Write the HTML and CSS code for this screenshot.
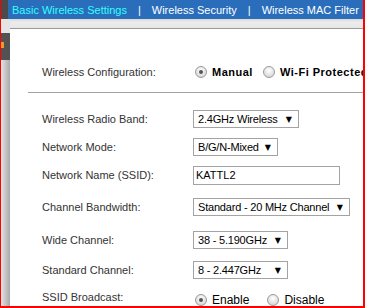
FILE: index.html
```html
<!DOCTYPE html>
<html lang="en">
<head>
    <meta charset="UTF-8">
    <title>Basic Wireless Settings</title>
    <link rel="stylesheet" href="styles.css">
</head>
<body>
    <div class="frame">
        <!-- Tabs -->
        <nav class="tabs">
            <a class="tab active">Basic Wireless Settings</a>
            <span class="sep">|</span>
            <a class="tab">Wireless Security</a>
            <span class="sep">|</span>
            <a class="tab">Wireless MAC Filter</a>
        </nav>

        <div class="body">
            <aside class="side">
                <div class="side-top"></div>
                <div class="side-block"><span class="side-mark"></span></div>
            </aside>

            <div class="content">
                <div class="strip"></div>

                <section class="panel">
                    <div class="row row-config">
                        <span class="label">Wireless Configuration:</span>
                        <div class="choices">
                            <span class="radio checked"></span>
                            <span class="choice bold">Manual</span>
                            <span class="radio"></span>
                            <span class="choice bold">Wi-Fi Protected Setup</span>
                        </div>
                    </div>

                    <hr class="divider">

                    <div class="row row-band">
                        <span class="label">Wireless Radio Band:</span>
                        <div class="select w-band"><span>2.4GHz Wireless</span><span class="arrow">&#9660;</span></div>
                    </div>

                    <div class="row">
                        <span class="label">Network Mode:</span>
                        <div class="select w-mode"><span>B/G/N-Mixed</span><span class="arrow">&#9660;</span></div>
                    </div>

                    <div class="row">
                        <span class="label">Network Name (SSID):</span>
                        <div class="textbox">KATTL2</div>
                    </div>

                    <div class="row row-bw">
                        <span class="label">Channel Bandwidth:</span>
                        <div class="select w-bw"><span>Standard - 20 MHz Channel</span><span class="arrow">&#9660;</span></div>
                    </div>

                    <div class="row row-wide">
                        <span class="label">Wide Channel:</span>
                        <div class="select w-chan"><span>38 - 5.190GHz</span><span class="arrow">&#9660;</span></div>
                    </div>

                    <div class="row row-std">
                        <span class="label">Standard Channel:</span>
                        <div class="select w-chan"><span>8 - 2.447GHz</span><span class="arrow">&#9660;</span></div>
                    </div>

                    <div class="row row-bcast">
                        <span class="label">SSID Broadcast:</span>
                        <div class="choices low">
                            <span class="radio checked"></span>
                            <span class="choice">Enable</span>
                            <span class="radio gap"></span>
                            <span class="choice">Disable</span>
                        </div>
                    </div>
                </section>
            </div>
        </div>
    </div>
</body>
</html>
```

FILE: styles.css
```css
body {
    margin: 0;
    font-family: "Liberation Sans", Arial, sans-serif;
    font-size: 11px;
    background-color: #fff;
}

.frame {
    width: 362px;
    height: 306px;
    border: 2px solid #ff0000;
    border-top: none;
    border-left-width: 1px;
    overflow: hidden;
    display: flex;
    flex-direction: column;
}

/* Tabs */
.tabs {
    display: flex;
    align-items: center;
    height: 19px;
    flex-shrink: 0;
    background-color: #2a6ebb;
    border-left: 7px solid #4b4b4b;
    padding-left: 4px;
    white-space: nowrap;
    color: #ffffff;
}

.tab {
    color: #ffffff;
}

.tab.active {
    color: #33ffff;
}

.sep {
    margin: 0 11px;
}

.body {
    flex: 1;
    display: flex;
    min-height: 0;
}

.side {
    width: 9px;
    flex-shrink: 0;
    background: linear-gradient(to right, #e2e2e2, #a9a9a9);
    display: flex;
    flex-direction: column;
}

.side-top {
    height: 14px;
    background-color: #e4e4e4;
}

.side-block {
    height: 27px;
    background-color: #525252;
    position: relative;
}

.side-mark {
    position: absolute;
    left: 0;
    top: 9px;
    width: 3px;
    height: 6px;
    background-color: #e89a2a;
}

.content {
    flex: 1;
    display: flex;
    flex-direction: column;
    min-width: 0;
}

.strip {
    height: 9px;
    flex-shrink: 0;
    background: linear-gradient(to bottom, #d8d8d8, #ececec 3px, #e6e6e6);
}

.panel {
    flex: 1;
    background-color: #fff;
    border-top: 1px solid #9a9a9a;
    padding-top: 33px;
    overflow: hidden;
    white-space: nowrap;
}

.row {
    display: flex;
    align-items: center;
    height: 20px;
    padding-left: 32px;
    margin-top: 8px;
}

.row-config {
    margin-top: 0;
}

.row-band {
    margin-top: 16px;
}

.row-bw {
    margin-top: 12px;
}

.row-wide {
    margin-top: 13px;
}

.row-std {
    margin-top: 10px;
}

.row-bcast {
    margin-top: 7px;
}

.label {
    width: 151px;
    flex-shrink: 0;
    color: #333;
}

.divider {
    margin: 10px 0 0 18px;
    border: none;
    border-top: 1px solid #a3a3a3;
    height: 0;
}

/* Radios */
.choices {
    display: flex;
    align-items: center;
    padding-left: 2px;
    color: #000;
}

.choices.low {
    padding-top: 6px;
}

.radio {
    width: 10px;
    height: 10px;
    border: 1px solid #9a9a9a;
    border-radius: 50%;
    background: radial-gradient(circle at 50% 35%, #ffffff, #dcdcdc 70%, #cfcfcf);
    position: relative;
    flex-shrink: 0;
}

.radio.checked::after {
    content: "";
    position: absolute;
    left: 3px;
    top: 3px;
    width: 4px;
    height: 4px;
    border-radius: 50%;
    background-color: #555;
}

.choice {
    margin: 0 10px 0 5px;
}

.choices.low .choice {
    margin-right: 18px;
    font-size: 12px;
}

.bold {
    font-weight: bold;
    letter-spacing: 0.5px;
}

/* Select boxes */
.select {
    display: flex;
    justify-content: space-between;
    align-items: center;
    box-sizing: border-box;
    height: 18px;
    padding: 0 6px 0 4px;
    border: 1px solid #a3a3a3;
    background-color: #fff;
    color: #000;
    letter-spacing: -0.2px;
}

.arrow {
    font-family: "DejaVu Sans", sans-serif;
    font-size: 8px;
    letter-spacing: 0;
}

.w-band {
    width: 106px;
}

.w-mode {
    width: 85px;
}

.w-bw {
    width: 157px;
}

.w-chan {
    width: 95px;
}

.textbox {
    box-sizing: border-box;
    width: 147px;
    height: 19px;
    line-height: 17px;
    padding-left: 2px;
    border: 1px solid #a3a3a3;
    color: #000;
}
```
